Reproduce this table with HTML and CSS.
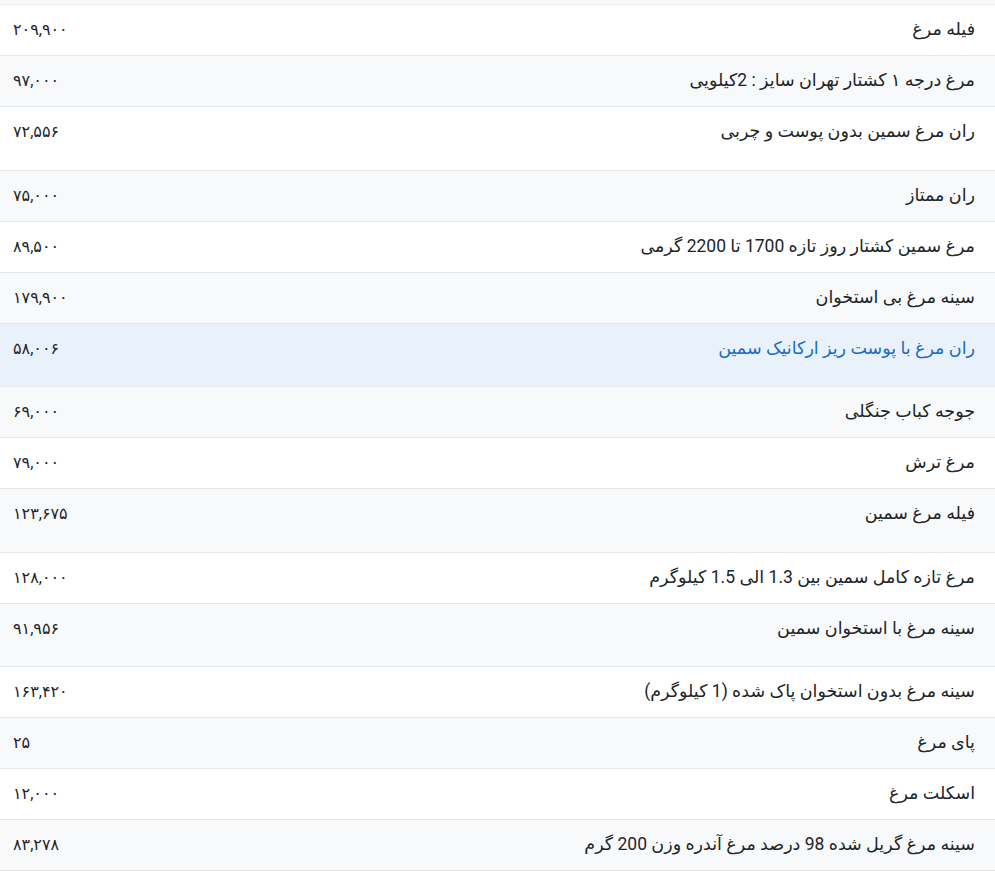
FILE: index.html
```html
<!DOCTYPE html>
<html lang="fa" dir="rtl">
<head>
<meta charset="utf-8">
<title>قیمت مرغ</title>
<link rel="stylesheet" href="styles.css">
</head>
<body>
<div class="prices">
  <div class="row row-even row-partial"></div>
  <div class="row"><div class="name">فیله مرغ</div><div class="price">۲۰۹,۹۰۰</div></div>
  <div class="row row-even"><div class="name">مرغ درجه ۱ کشتار تهران سایز : 2کیلویی</div><div class="price">۹۷,۰۰۰</div></div>
  <div class="row row-tall"><div class="name">ران مرغ سمین بدون پوست و چربی</div><div class="price">۷۲,۵۵۶</div></div>
  <div class="row row-even"><div class="name">ران ممتاز</div><div class="price">۷۵,۰۰۰</div></div>
  <div class="row"><div class="name">مرغ سمین کشتار روز تازه 1700 تا 2200 گرمی</div><div class="price">۸۹,۵۰۰</div></div>
  <div class="row row-even"><div class="name">سینه مرغ بی استخوان</div><div class="price">۱۷۹,۹۰۰</div></div>
  <div class="row row-tall row-hover"><div class="name">ران مرغ با پوست ریز ارکانیک سمین</div><div class="price">۵۸,۰۰۶</div></div>
  <div class="row row-even"><div class="name">جوجه کباب جنگلی</div><div class="price">۶۹,۰۰۰</div></div>
  <div class="row"><div class="name">مرغ ترش</div><div class="price">۷۹,۰۰۰</div></div>
  <div class="row row-even row-tall"><div class="name">فیله مرغ سمین</div><div class="price">۱۲۳,۶۷۵</div></div>
  <div class="row"><div class="name">مرغ تازه کامل سمین بین 1.3 الی 1.5 کیلوگرم</div><div class="price">۱۲۸,۰۰۰</div></div>
  <div class="row row-even row-tall"><div class="name">سینه مرغ با استخوان سمین</div><div class="price">۹۱,۹۵۶</div></div>
  <div class="row"><div class="name">سینه مرغ بدون استخوان پاک شده (1 کیلوگرم)</div><div class="price">۱۶۳,۴۲۰</div></div>
  <div class="row row-even"><div class="name">پای مرغ</div><div class="price">۲۵</div></div>
  <div class="row"><div class="name">اسکلت مرغ</div><div class="price">۱۲,۰۰۰</div></div>
  <div class="row row-even"><div class="name">سینه مرغ گریل شده 98 درصد مرغ آندره وزن 200 گرم</div><div class="price">۸۳,۲۷۸</div></div>
</div>
</body>
</html>
```

FILE: styles.css
```css
html, body {
  margin: 0;
  padding: 0;
  background: #ffffff;
}

body {
  font-family: Roboto, "DejaVu Sans", sans-serif;
  font-size: 16px;
  color: #212529;
  direction: rtl;
}

.prices {
  display: flex;
  flex-direction: column;
  width: 995px;
}

.row {
  display: flex;
  justify-content: space-between;
  align-items: flex-start;
  border-bottom: 1px solid #e4e7ea;
  background: #ffffff;
  padding: 12px 20px 13px 13px;
  line-height: 25px;
}

.row-even {
  background: #f8f9fa;
}

.row-partial {
  height: 4px;
  padding: 0;
  border-bottom-color: #e9ecef;
}

.row-tall {
  padding-bottom: 25.5px;
}

.row-hover {
  background: #e9f1fb;
}

.row-hover .name {
  color: #1a6cc8;
}

.name {
  text-align: right;
  font-size: 17.5px;
}

.price {
  text-align: left;
  direction: rtl;
}
```
